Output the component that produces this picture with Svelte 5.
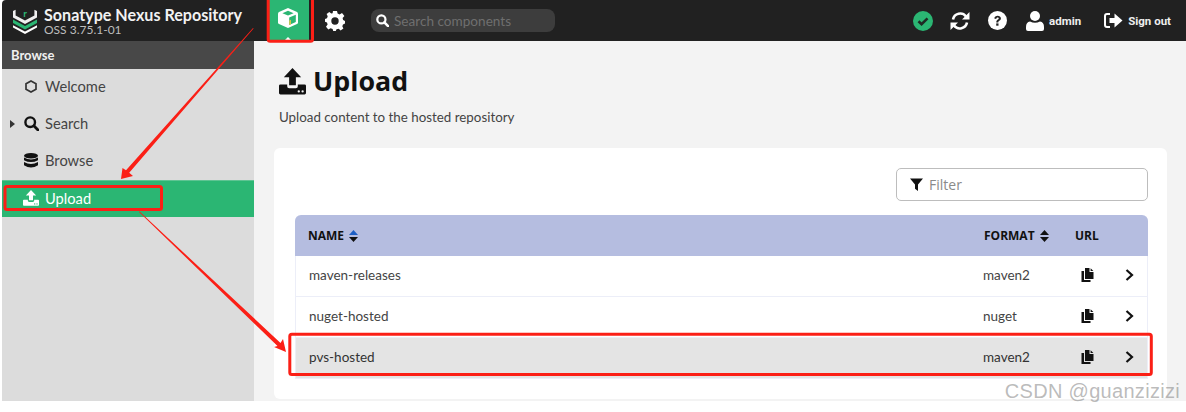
<script>
  const navItems = [
    { label: 'Welcome', icon: 'hex' },
    { label: 'Search', icon: 'search', caret: true },
    { label: 'Browse', icon: 'db' },
    { label: 'Upload', icon: 'upload', active: true }
  ];
  const rows = [
    { name: 'maven-releases', format: 'maven2' },
    { name: 'nuget-hosted', format: 'nuget' },
    { name: 'pvs-hosted', format: 'maven2', selected: true }
  ];
</script>

{#snippet uploadIcon(size, hole)}
  <svg width={size} height={size} viewBox="0 0 28 28" fill="currentColor" aria-hidden="true">
    <path d="M14 0 L23 9.5 H17.5 V18 H10.5 V9.5 H5 Z" />
    <path d="M1.5 17 H8.5 V19 Q8.5 21 10.5 21 H17.5 Q19.5 21 19.5 19 V17 H26.5 Q28 17 28 18.5 V26 Q28 27.5 26.5 27.5 H1.5 Q0 27.5 0 26 V18.5 Q0 17 1.5 17 Z" />
    <circle cx="20.5" cy="24.3" r="1.2" fill={hole} />
    <circle cx="24.5" cy="24.3" r="1.2" fill={hole} />
  </svg>
{/snippet}

{#snippet sortIcon(color)}
  <svg class="sort" width="9" height="12" viewBox="0 0 9 12" aria-hidden="true">
    <path d="M4.5 0 L9 5 H0 Z" fill={color} />
    <path d="M0 7 H9 L4.5 12 Z" fill="#111" />
  </svg>
{/snippet}

{#snippet copyIcon()}
  <svg width="13" height="14" viewBox="0 0 13 14" fill="#111" aria-hidden="true">
    <path d="M4 0 H8.5 V4 H12.5 V11 H4 Z" />
    <path d="M9.6 0.2 L12.4 3 H9.6 Z" />
    <path d="M0.5 3 H3 V12 H9.5 V14 H0.5 Z" />
  </svg>
{/snippet}

<div class="page">
  <header class="topbar">
    <div class="brand">
      <svg class="logo" width="24" height="26" viewBox="0 0 24 26" aria-hidden="true">
        <path d="M0 3 L2.6 1.8 V7.5 L12 12.6 L21.4 7.5 V1.8 L24 3 V9.6 L12 16 L0 9.6 Z" fill="#f0f0f0" />
        <path d="M0 11.5 L12 18 L24 11.5 V15 L12 21.5 L0 15 Z" fill="#2bb673" />
        <path d="M0 17.2 L12 23.4 L24 17.2 V19.6 L12 26 L0 19.6 Z" fill="#fff" />
        <text x="12" y="8.5" text-anchor="middle" font-size="10" font-weight="700" font-family="Lato" fill="#2bb673">r</text>
      </svg>
      <div class="brand-text">
        <div class="brand-name">Sonatype Nexus Repository</div>
        <div class="brand-ver">OSS 3.75.1-01</div>
      </div>
    </div>
    <div class="mode active">
      <svg width="20" height="20" viewBox="0 0 20 20" aria-hidden="true">
        <path d="M10 0 L19 4 Q20 4.5 20 5.5 V14.5 Q20 15.5 19 16 L10 20 L1 16 Q0 15.5 0 14.5 V5.5 Q0 4.5 1 4 Z" fill="#fff" />
        <path d="M10 2.8 L15.6 5.2 L10 7.6 L4.4 5.2 Z" fill="#2bb673" />
        <path d="M11.2 9.6 L17.8 6.8 V14 L11.2 17 Z" fill="#2bb673" />
        <path d="M11.2 12.4 L13 11.7 V16.2 L11.2 17 Z" fill="#d9c64a" />
      </svg>
    </div>
    <div class="mode">
      <svg width="20" height="20" viewBox="0 0 20 20" fill="#fff" aria-hidden="true">
        <path fill-rule="evenodd" d="M8 0 H12 L12.6 2.6 L14.6 3.5 L17 2.1 L19.4 5 L17.6 7 L18.1 9 L20 10 V12.5 L18 13.4 L17.3 15.3 L18.4 17.6 L15.6 19.5 L13.7 17.8 L11.5 18.3 L10.8 20 H8.2 L7.6 18 L5.6 17.3 L3.3 18.4 L1 15.7 L2.6 13.6 L2 11.6 L0 10.8 V8 L2 7.3 L2.7 5.3 L1.6 3 L4.3 1 L6.3 2.6 L7.6 2.2 Z M10 6.3 A3.7 3.7 0 1 0 10 13.7 A3.7 3.7 0 1 0 10 6.3 Z" />
      </svg>
    </div>
    <div class="search">
      <svg width="13" height="13" viewBox="0 0 14 14" fill="none" stroke="#fff" aria-hidden="true">
        <circle cx="5.8" cy="5.8" r="4.4" stroke-width="2.4" />
        <path d="M9 9 L13 13" stroke-width="2.8" stroke-linecap="round" />
      </svg>
      <span>Search components</span>
    </div>
    <div class="tools">
      <svg class="t-check" width="20" height="20" viewBox="0 0 20 20" aria-hidden="true">
        <circle cx="10" cy="10" r="10" fill="#2bb673" />
        <path d="M5.5 10.2 L8.6 13.2 L14.5 7.4" fill="none" stroke="#1f2a24" stroke-width="2.6" />
      </svg>
      <svg class="t-sync" width="20" height="20" viewBox="0 0 20 20" fill="none" aria-hidden="true">
        <path d="M3 8.5 A7.3 7.3 0 0 1 16 5.5" stroke="#fff" stroke-width="2.6" />
        <path d="M19.5 1 V8.6 H12 Z" fill="#fff" />
        <path d="M17 11.5 A7.3 7.3 0 0 1 4 14.5" stroke="#fff" stroke-width="2.6" />
        <path d="M0.5 19 V11.4 H8 Z" fill="#fff" />
      </svg>
      <svg class="t-help" width="19" height="19" viewBox="0 0 19 19" aria-hidden="true">
        <circle cx="9.5" cy="9.5" r="9.5" fill="#fff" />
        <path d="M6.3 7.4 C6.5 3.8 12.9 3.8 12.9 7.4 C12.9 9.6 10.3 9.4 10.3 11.4 H8.3 C8.3 8.5 10.7 8.6 10.7 7.4 C10.7 6 8.6 6 8.2 7.9 Z" fill="#222" />
        <rect x="8.2" y="12.4" width="2.3" height="2.3" fill="#222" />
      </svg>
      <div class="user">
        <svg width="18" height="20" viewBox="0 0 18 20" fill="#fff" aria-hidden="true">
          <circle cx="9" cy="5" r="5" />
          <path d="M4 10.5 Q9 13 14 10.5 Q18 11 18 16 V18 Q18 20 16 20 H2 Q0 20 0 18 V16 Q0 11 4 10.5 Z" />
        </svg>
        <span>admin</span>
      </div>
      <div class="signout">
        <svg width="19" height="15" viewBox="0 0 19 15" aria-hidden="true">
          <path d="M6 1 H3 Q1 1 1 3 V12 Q1 14 3 14 H6" fill="none" stroke="#fff" stroke-width="2" />
          <path d="M5.5 5 H10.5 V0.5 L18.5 7.5 L10.5 14.5 V10 H5.5 Z" fill="#fff" />
        </svg>
        <span>Sign out</span>
      </div>
    </div>
  </header>

  <div class="body">
    <aside class="sidebar">
      <div class="side-title">Browse</div>
      <nav>
        {#each navItems as item}
          <div class="nav-item" class:active={item.active}>
            {#if item.caret}<span class="caret"></span>{/if}
            <span class="nav-icon">
              {#if item.icon === 'hex'}
                <svg width="12" height="13" viewBox="0 0 12 13" fill="none" stroke="#333" stroke-width="1.7" aria-hidden="true">
                  <path d="M6 1 L11 3.7 V9.3 L6 12 L1 9.3 V3.7 Z" />
                </svg>
              {:else if item.icon === 'search'}
                <svg width="15" height="15" viewBox="0 0 15 15" fill="none" stroke="#111" aria-hidden="true">
                  <circle cx="6.2" cy="6.2" r="4.8" stroke-width="2.4" />
                  <path d="M9.8 9.8 L14 14" stroke-width="2.8" stroke-linecap="round" />
                </svg>
              {:else if item.icon === 'db'}
                <svg width="14" height="15" viewBox="0 0 14 15" fill="#111" aria-hidden="true">
                  <ellipse cx="7" cy="2.8" rx="7" ry="2.8" />
                  <path d="M0 4.6 Q7 8.4 14 4.6 V7.2 Q7 11 0 7.2 Z" />
                  <path d="M0 9 Q7 12.8 14 9 V12.2 Q7 16.6 0 12.2 Z" />
                </svg>
              {:else}
                <span class="nav-upload">{@render uploadIcon(16, '#2bb673')}</span>
              {/if}
            </span>
            <span>{item.label}</span>
          </div>
        {/each}
      </nav>
    </aside>

    <main class="content">
      <h1>{@render uploadIcon(27, '#f3f3f3')}<span>Upload</span></h1>
      <p class="sub">Upload content to the hosted repository</p>
      <section class="card">
        <div class="filter-row">
          <div class="filter">
            <svg width="13" height="13" viewBox="0 0 13 13" fill="#111" aria-hidden="true">
              <path d="M0 0.5 H13 L8 6.5 V13 L5 10.8 V6.5 Z" />
            </svg>
            <span>Filter</span>
          </div>
        </div>
        <div class="table">
          <div class="row head">
            <div class="c-name">NAME {@render sortIcon('#1d5fc4')}</div>
            <div class="c-format">FORMAT {@render sortIcon('#111')}</div>
            <div class="c-url">URL</div>
            <div class="c-go"></div>
          </div>
          {#each rows as row}
            <div class="row item" class:selected={row.selected}>
              <div class="c-name">{row.name}</div>
              <div class="c-format">{row.format}</div>
              <div class="c-url">{@render copyIcon()}</div>
              <div class="c-go">
                <svg width="9" height="12" viewBox="0 0 9 12" fill="none" stroke="#111" stroke-width="2.2" aria-hidden="true">
                  <path d="M1.5 1 L7 6 L1.5 11" />
                </svg>
              </div>
            </div>
          {/each}
        </div>
      </section>
    </main>
  </div>

  <svg class="marks" width="1186" height="412" viewBox="0 0 1186 412" fill="none" aria-hidden="true">
    <rect x="268.2" y="-3" width="44.3" height="44.3" rx="2" stroke="#fb1f16" stroke-width="3" />
    <rect x="5" y="186.5" width="156.5" height="23" rx="2" stroke="#fb1f16" stroke-width="3" />
    <rect x="289.8" y="334.2" width="861.5" height="40.3" rx="2" stroke="#fb1f16" stroke-width="3" />
    <path d="M253 28 L253.6 28.5 L129.2 172.8 L133 176 L121 179 L122.5 168 L126 170.2 Z" fill="#fb1f16" />
    <path d="M139 212 L139.6 211.6 L280.5 342.9 L283 339 L286 352 L274 347 L277.5 346.1 Z" fill="#fb1f16" />
  </svg>

  <div class="watermark">CSDN @guanzizizi</div>
</div>

<style>
  :global(body) { margin: 0; background: #fff; }
  .page {
    position: relative;
    width: 1186px;
    height: 412px;
    overflow: hidden;
    background: #fff;
    box-sizing: border-box;
    padding: 0 0 11px 2px;
    display: flex;
    flex-direction: column;
    font-family: "Lato", "Liberation Sans", sans-serif;
  }
  .topbar {
    height: 41px;
    flex: none;
    background: #212121;
    color: #fff;
    display: flex;
    align-items: center;
    border-top-left-radius: 4px;
  }
  .brand { width: 252px; flex: none; display: flex; align-items: center; gap: 7px; padding-left: 11px; margin-right: 13px; box-sizing: border-box; }
  .logo { flex: none; }
  .brand-name { font-size: 16.1px; font-weight: 700; line-height: 17px; color: #f2f2f2; white-space: nowrap; }
  .brand-ver { font-size: 12px; line-height: 13px; color: #bdbdbd; }
  .mode { width: 42px; height: 41px; display: flex; align-items: center; justify-content: center; flex: none; position: relative; }
  .mode.active { background: #2bb673; margin-right: 5px; }
  .mode.active svg { margin-bottom: 5px; }
  .mode.active::after {
    content: "";
    position: absolute;
    bottom: 0;
    left: 17px;
    border-left: 4px solid transparent;
    border-right: 4px solid transparent;
    border-bottom: 4px solid #fff;
  }
  .search {
    width: 184px;
    height: 23px;
    margin-left: 15px;
    background: #3d3d3d;
    border-radius: 8px;
    display: flex;
    align-items: center;
    gap: 5px;
    padding-left: 5px;
    box-sizing: border-box;
    font-size: 13.6px;
    color: #6f6f6f;
    white-space: nowrap;
  }
  .tools { margin-left: auto; padding-right: 15px; display: flex; align-items: center; }
  .t-sync { margin-left: 17px; }
  .t-help { margin-left: 18px; }
  .user { margin-left: 19px; display: flex; align-items: center; gap: 5px; font-size: 11.5px; font-weight: 700; font-family: "Roboto", sans-serif; color: #eee; }
  .signout { margin-left: 23px; display: flex; align-items: center; gap: 5px; font-size: 11.5px; font-weight: 700; font-family: "Roboto", sans-serif; color: #eee; }

  .body { flex: 1; display: flex; min-height: 0; }
  .sidebar { width: 252px; flex: none; background: #dcdcdc; }
  .side-title { height: 28px; background: #484848; color: #f0f0f0; font-size: 13px; font-weight: 700; display: flex; align-items: center; padding-left: 9px; }
  .nav-item {
    position: relative;
    height: 37px;
    display: flex;
    align-items: center;
    padding: 0 0 3px 21px;
    box-sizing: border-box;
    font-size: 14.7px;
    color: #444;
  }
  .nav-item.active { background: #2bb673; color: #fff; border-top: 1px solid #5ec492; }
  .nav-icon { width: 16px; margin-right: 6px; display: flex; justify-content: center; flex: none; color: #fff; }
  .nav-upload { display: flex; }
  .caret {
    position: absolute;
    left: 8px;
    top: 14px;
    border-top: 4px solid transparent;
    border-bottom: 4px solid transparent;
    border-left: 5px solid #333;
  }
  .content { flex: 1; background: #f3f3f3; padding: 0 19px 0 20px; min-width: 0; }
  h1 { margin: 25px 0 0 5px; height: 30px; display: flex; align-items: center; gap: 7px; font-family: "Open Sans", sans-serif; font-size: 26.8px; font-weight: 700; color: #111; line-height: 30px; }
  h1 svg { flex: none; }
  .sub { margin: 12px 0 0 5px; font-size: 13.35px; line-height: 18px; color: #444; }
  .card { margin-top: 22px; background: #fff; border-radius: 6px; height: 251px; box-sizing: border-box; padding: 20px 19px 0 21px; }
  .filter-row { display: flex; justify-content: flex-end; }
  .filter {
    width: 252px;
    height: 33px;
    box-sizing: border-box;
    border: 1px solid #bdbdbd;
    border-radius: 5px;
    display: flex;
    align-items: center;
    gap: 6px;
    padding-left: 13px;
    font-size: 14px;
    color: #8a8a8a;
    font-family: "Open Sans", sans-serif;
  }
  .table { margin-top: 14px; border: 1px solid #eceef8; border-top: 0; border-radius: 6px 6px 0 0; }
  .row { display: flex; align-items: center; }
  .head { height: 41px; background: #b5bde0; border-radius: 6px 6px 0 0; font-family: "Open Sans", sans-serif; font-weight: 700; font-size: 12px; color: #111; margin: 0 -1px; }
  .item { height: 41px; border-top: 1px solid #eceef8; box-sizing: border-box; font-size: 13.5px; color: #444; padding-bottom: 2px; }
  .head + .item { border-top: 0; height: 40px; }
  .item.selected { background: #e4e4e4; color: #333; }
  .head .c-name { padding-left: 13px; }
  .c-name { flex: 1; padding-left: 13px; display: flex; align-items: center; gap: 5px; }
  .c-format { width: 91px; display: flex; align-items: center; gap: 5px; }
  .c-url { width: 41px; display: flex; align-items: center; }
  .item .c-url { padding-left: 7px; box-sizing: border-box; }
  .c-go { width: 32px; display: flex; align-items: center; padding-left: 10px; box-sizing: border-box; }
  .marks { position: absolute; left: 0; top: 0; pointer-events: none; }
  .watermark { position: absolute; right: 6px; top: 380px; font-family: "Liberation Sans", sans-serif; font-size: 20px; color: rgba(130,130,130,0.55); letter-spacing: 0.3px; white-space: nowrap; }
</style>
